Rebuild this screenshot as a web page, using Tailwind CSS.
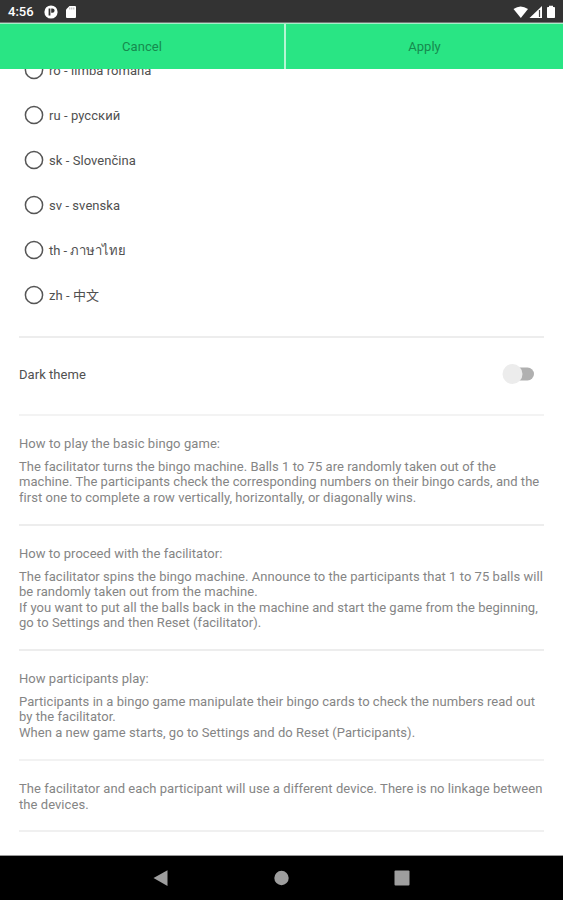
<!DOCTYPE html>
<html lang="en">
<head>
<meta charset="utf-8">
<title>Settings</title>
<script src="https://cdn.jsdelivr.net/npm/@tailwindcss/browser@4"></script>
</head>
<body class="bg-white">
<div class="w-[563px] h-[900px] flex flex-col overflow-hidden bg-white font-[Roboto,'Noto_Sans','Noto_Sans_CJK_SC',sans-serif] text-[13px] text-[#858585]">
  <header class="h-[23px] shrink-0 bg-[#333] border-b border-[#777] flex items-center pl-[8px] pr-[6px] text-white">
    <span class="text-[13px] font-medium w-[36px] pt-[2px]">4:56</span>
    <svg class="mt-[2px]" width="14" height="14" viewBox="0 0 14 14"><circle cx="7" cy="7" r="6.6" fill="#fff"/><path d="M4.600 3.400H6.400V10.600H4.600ZM7.200 3.400H8.400A2.200 2.200 0 0 1 8.400 7.800H7.200Z" fill="#333"/></svg>
    <svg class="ml-[7px] mt-[2px]" width="12" height="14" viewBox="0 0 12 14"><path d="M4.5 1H10Q11 1 11 2V12Q11 13 10 13H2Q1 13 1 12V4.5Z" fill="#fff"/><path d="M4.8 2.5V4.500M6.8 2.5V4.500M8.8 2.5V4.500" stroke="#999" stroke-width=".8"/></svg>
    <svg class="ml-auto mt-[2px]" width="44" height="14" viewBox="0 0 44 14"><path d="M.5 4Q7.500 -1 15 4L7.800 13Z" fill="#fff"/><path d="M29 1V13H16.500Z" fill="#fff"/><path d="M26.500 5V12" stroke="#444" stroke-width="1.200"/><path d="M34 2.500Q34 2 35 2H36V.8H40V2H41Q42 2 42 2.500V12.300Q42 13 41.300 13H34.700Q34 13 34 12.300Z" fill="#fff"/></svg>
  </header>
  <nav class="h-[46px] shrink-0 flex bg-[#29e584] border-t border-t-[#a5efc8] text-[#168a4e] text-[13px] tracking-[.05px]">
    <button class="w-[286px] border-r-2 border-[#b5f6d3] pt-[1px]">Cancel</button>
    <button class="flex-1 pt-[1px]">Apply</button>
  </nav>
  <main class="flex-1 min-h-0 overflow-hidden px-[19px]">
    <ul class="-mt-[22px] h-[291px] border-b-2 border-[#ededed] pl-[5px] text-[#505050] tracking-[.06px]">
      <li class="h-[45px] flex items-center gap-[5px]"><svg width="20" height="20" viewBox="0 0 20 20"><circle cx="10" cy="10" r="8.600" fill="none" stroke="#555" stroke-width="1.500"/></svg><span class="pt-[3px]">ro - limba română</span></li>
      <li class="h-[45px] flex items-center gap-[5px]"><svg width="20" height="20" viewBox="0 0 20 20"><circle cx="10" cy="10" r="8.600" fill="none" stroke="#555" stroke-width="1.500"/></svg><span class="pt-[3px]">ru - русский</span></li>
      <li class="h-[45px] flex items-center gap-[5px]"><svg width="20" height="20" viewBox="0 0 20 20"><circle cx="10" cy="10" r="8.600" fill="none" stroke="#555" stroke-width="1.500"/></svg><span class="pt-[3px]">sk - Slovenčina</span></li>
      <li class="h-[45px] flex items-center gap-[5px]"><svg width="20" height="20" viewBox="0 0 20 20"><circle cx="10" cy="10" r="8.600" fill="none" stroke="#555" stroke-width="1.500"/></svg><span class="pt-[3px]">sv - svenska</span></li>
      <li class="h-[45px] flex items-center gap-[5px]"><svg width="20" height="20" viewBox="0 0 20 20"><circle cx="10" cy="10" r="8.600" fill="none" stroke="#555" stroke-width="1.500"/></svg><span class="pt-[3px] tracking-[-.05px]">th - ภาษาไทย</span></li>
      <li class="h-[45px] flex items-center gap-[5px]"><svg width="20" height="20" viewBox="0 0 20 20"><circle cx="10" cy="10" r="8.600" fill="none" stroke="#555" stroke-width="1.500"/></svg><span class="pt-[3px]">zh - 中文</span></li>
    </ul>
    <section class="h-[78px] border-b-2 border-[#f3f3f3] flex items-center justify-between pr-[9px] pb-[4px] text-[#505050]">
      <span class="tracking-[.05px] pt-[1px]">Dark theme</span>
      <svg width="33" height="22" viewBox="0 0 33 22"><rect x="10" y="4.500" width="22" height="13" rx="6.500" fill="#b0b0b0"/><circle cx="10.500" cy="11" r="10" fill="#ececec"/></svg>
    </section>
    <section class="h-[110px] border-b-2 border-[#ededed] pt-[20px] leading-[15.500px] tracking-[.04px] whitespace-nowrap">
      <h2 class="mb-[7px] tracking-[.08px]">How to play the basic bingo game:</h2>
      <p>The facilitator turns the bingo machine. Balls 1 to 75 are randomly taken out of the<br>machine. The participants check the corresponding numbers on their bingo cards, and the<br>first one to complete a row vertically, horizontally, or diagonally wins.</p>
    </section>
    <section class="h-[125px] border-b-2 border-[#ededed] pt-[20px] leading-[15.500px] tracking-[.04px] whitespace-nowrap">
      <h2 class="mb-[7px]">How to proceed with the facilitator:</h2>
      <p>The facilitator spins the bingo machine. Announce to the participants that 1 to 75 balls will<br>be randomly taken out from the machine.<br>If you want to put all the balls back in the machine and start the game from the beginning,<br>go to Settings and then Reset (facilitator).</p>
    </section>
    <section class="h-[110px] border-b-2 border-[#f2f2f2] pt-[20px] leading-[15.500px] tracking-[.045px] whitespace-nowrap">
      <h2 class="mb-[7px]">How participants play:</h2>
      <p>Participants in a bingo game manipulate their bingo cards to check the numbers read out<br>by the facilitator.<br>When a new game starts, go to Settings and do Reset (Participants).</p>
    </section>
    <section class="h-[71px] border-b-2 border-[#f0f0f0] pt-[20px] leading-[15.500px] tracking-[.055px] whitespace-nowrap">
      <p>The facilitator and each participant will use a different device. There is no linkage between<br>the devices.</p>
    </section>
  </main>
  <footer class="h-[45px] shrink-0 bg-black border-t border-[#999] flex justify-center">
    <svg width="320" height="44" viewBox="2 0 320 44" fill="#9e9e9e"><path d="M33.500 22L47.500 14.300V30Z"/><circle cx="161.500" cy="22" r="7.200"/><rect x="274.500" y="14.500" width="15" height="15" rx="1"/></svg>
  </footer>
</div>
</body>
</html>
